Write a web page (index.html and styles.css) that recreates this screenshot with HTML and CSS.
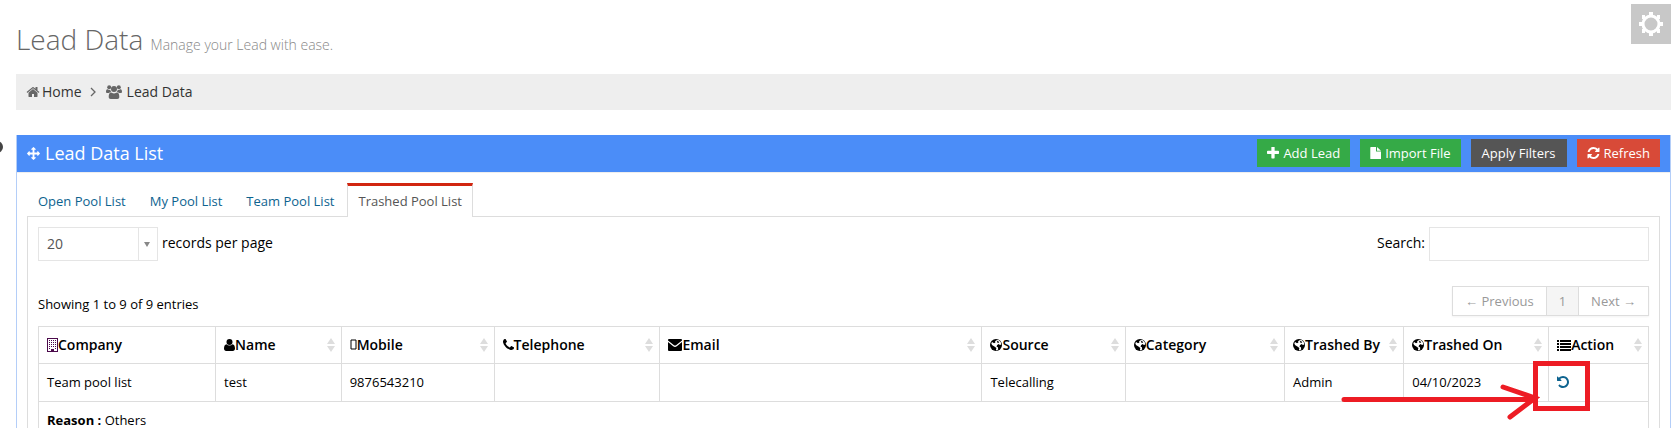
FILE: index.html
```
<!DOCTYPE html>
<html lang="en">
<head>
    <meta charset="UTF-8">
    <meta name="viewport" content="width=device-width, initial-scale=1.0">
    <title>Lead Data</title>
    <link rel="stylesheet" href="styles.css">
</head>
<body>
    <!-- Icon set -->
    <svg class="icon-set" aria-hidden="true">
        <symbol id="i-home" viewBox="0 0 1792 1792"><path d="M1472 992v480q0 26-19 45t-45 19h-384v-384h-256v384h-384q-26 0-45-19t-19-45v-480q0-1 .5-3t.5-3l575-474 575 474q1 2 1 6zm223-69l-62 74q-8 9-21 11h-3q-13 0-21-7l-692-577-692 577q-12 8-24 7-13-2-21-11l-62-74q-8-10-7-23.5t11-21.5l719-599q32-26 76-26t76 26l244 204v-195q0-14 9-23t23-9h192q14 0 23 9t9 23v408l219 182q10 8 11 21.5t-7 23.5z"/></symbol>
        <symbol id="i-users" viewBox="0 0 16 14"><circle cx="3.2" cy="2.2" r="2"/><circle cx="12.8" cy="2.2" r="2"/><circle cx="8" cy="4" r="3"/><path d="M0 7c0-1.600.5-2.700 1.300-2.700.5 0 1 .6 2 .6.400 0 .7 0 1-.2 0 1 .3 1.700.9 2.400C4.200 7.100 3.500 7.500 3 8H1.500C.6 8 0 7.700 0 7zM16 7c0-1.600-.5-2.700-1.300-2.700-.5 0-1 .6-2 .6-.4 0-.7 0-1-.2 0 1-.3 1.700-.9 2.400 1 0 1.700.4 2.200.9h1.500c.9 0 1.500-.3 1.500-1zM4.700 14h6.600c1.300 0 2-.8 2-2 0-2.400-.6-4.500-2.500-4.500-.4 0-1.300 1-2.800 1s-2.400-1-2.800-1c-1.900 0-2.500 2.100-2.500 4.500 0 1.200.7 2 2 2z"/></symbol>
        <symbol id="i-arrows" viewBox="0 0 1792 1792"><path d="M1792 896q0 26-19 45l-256 256q-19 19-45 19t-45-19-19-45v-128h-384v384h128q26 0 45 19t19 45-19 45l-256 256q-19 19-45 19t-45-19l-256-256q-19-19-19-45t19-45 45-19h128v-384h-384v128q0 26-19 45t-45 19-45-19l-256-256q-19-19-19-45t19-45l256-256q19-19 45-19t45 19 19 45v128h384v-384h-128q-26 0-45-19t-19-45 19-45l256-256q19-19 45-19t45 19l256 256q19 19 19 45t-19 45-45 19h-128v384h384v-128q0-26 19-45t45-19 45 19l256 256q19 19 19 45z"/></symbol>
        <symbol id="i-plus" viewBox="192 192 1408 1408"><path d="M1600 736v192q0 40-28 68t-68 28h-416v416q0 40-28 68t-68 28h-192q-40 0-68-28t-28-68v-416h-416q-40 0-68-28t-28-68v-192q0-40 28-68t68-28h416v-416q0-40 28-68t68-28h192q40 0 68 28t28 68v416h416q40 0 68 28t28 68z"/></symbol>
        <symbol id="i-file" viewBox="0 0 11 12"><path d="M1 0h5v4.500h5V11.500q0 .5-.5.5H.8q-.5 0-.5-.5V.7Q.3 0 1 0zM7 0l4 3.700H7z"/></symbol>
        <symbol id="i-refresh" viewBox="128 128 1536 1536"><path d="M1639 1056q0 5-1 7-64 268-268 434.500t-478 166.500q-146 0-282.500-55t-243.500-157l-129 129q-19 19-45 19t-45-19-19-45v-448q0-26 19-45t45-19h448q26 0 45 19t19 45-19 45l-137 137q71 66 161 102t187 36q134 0 250-65t186-179q11-17 53-117 8-23 30-23h192q13 0 22.500 9.500t9.500 22.500zm25-800v448q0 26-19 45t-45 19h-448q-26 0-45-19t-19-45 19-45l138-138q-148-137-349-137-134 0-250 65t-186 179q-11 17-53 117-8 23-30 23h-199q-13 0-22.500-9.500t-9.500-22.500v-7q65-268 270-434.500t480-166.500q146 0 284 55.500t245 156.500l130-129q19-19 45-19t45 19 19 45z"/></symbol>
        <symbol id="i-undo" viewBox="128 128 1536 1536"><path d="M1664 896q0 156-61 298t-164 245-245 164-298 61q-172 0-327-72.500t-264-204.500q-7-10-6.500-22.500t8.500-20.500l137-138q10-9 25-9 16 2 23 12 73 95 179 147t225 52q104 0 198.500-40.500t163.500-109.500 109.500-163.500 40.500-198.500-40.500-198.500-109.500-163.500-163.500-109.500-198.500-40.500q-98 0-188 35.500t-160 101.500l137 138q31 30 14 69-17 40-59 40h-448q-26 0-45-19t-19-45v-448q0-42 40-59 39-17 69 14l130 129q107-101 244.500-156.500t284.500-55.500q156 0 298 61t245 164 164 245 61 298z"/></symbol>
        <symbol id="i-building" viewBox="0 0 11 14"><path d="M0 0h11v14H0zM1 1v12h3v-2h3v2h3V1z" fill-rule="evenodd"/><path d="M2 2.500h7M2 4.500h7M2 6.500h7M2 8.500h7M2 10.500h1M8 10.500h1" stroke="currentColor" stroke-dasharray="1 1"/></symbol>
        <symbol id="i-user" viewBox="0 0 11 12"><circle cx="5.500" cy="3" r="3"/><path d="M2.500 5.200C.8 5.400 0 7 0 9.600 0 11.200.9 12 2.200 12h6.600c1.300 0 2.200-.8 2.200-2.400 0-2.600-.8-4.200-2.500-4.400C7.700 6 6.700 6.400 5.500 6.400S3.300 6 2.500 5.200z"/></symbol>
        <symbol id="i-box" viewBox="0 0 7 12"><path d="M1 1h5v9H1z" fill="none" stroke="currentColor"/></symbol>
        <symbol id="i-phone" viewBox="192 256 1408 1280"><path d="M1600 1240q0 27-10 70.500t-21 68.500q-21 50-122 106-94 51-186 51-27 0-52.500-3.500t-57.500-12.500-47.500-14.500-55.500-20.500-49-18q-98-35-175-83-128-79-264.500-215.500t-215.500-264.500q-48-77-83-175-3-9-18-49t-20.500-55.500-14.500-47.500-12.500-57.500-3.500-52.500q0-92 51-186 56-101 106-122 25-11 68.500-21t70.500-10q14 0 21 3 18 6 53 76 11 19 30 54t35 63.500 31 53.500q3 4 17.500 25t21.500 35.500 7 28.500q0 20-28.500 50t-62 55-62 53-28.500 46q0 9 5 22.500t8.500 20.500 14 24 11.500 19q76 137 174 235t235 174q2 1 19 11.500t24 14 20.500 8.500 22.500 5q18 0 46-28.500t53-62 55-62 50-28.500q14 0 28.500 7t35.500 21.500 25 17.500q25 15 53.500 31t63.500 35 54 30q70 35 76 53 3 7 3 21z"/></symbol>
        <symbol id="i-mail" viewBox="0 0 14 12"><path d="M0 1q0-1 1-1h12q1 0 1 1v.4L8 6.200q-1 .8-2 0L0 1.400zM0 3l5.200 4.300q1.800 1.200 3.600 0L14 3v8q0 1-1 1H1q-1 0-1-1z"/></symbol>
        <symbol id="i-globe" viewBox="0 0 12 12"><circle cx="6" cy="6" r="6"/><path d="M6.500 1.200l2-.1 2.200 2 .6 2.500-1.400.3-1.200-.8-1.500.8-.7 1.600 1.400.8.3 2.200-1.600.9-.7-.7.5-1.600-2-1.700L2 6 1.300 4.200l.8-1.300L4 4.300l1.400-.9-.3-1.200z" fill="#fff" fill-rule="evenodd"/><path d="M6.800 2l1.600.2.800 1.300-1.500.6z"/></symbol>
        <symbol id="i-list" viewBox="0 0 14 11"><path d="M0 0h2v2H0zM3 0h11v2H3zM0 3h2v2H0zM3 3h11v2H3zM0 6h2v2H0zM3 6h11v2H3zM0 9h2v2H0zM3 9h11v2H3z"/></symbol>
        <symbol id="i-sort" viewBox="0 0 8 14"><path d="M4 0l4 6H0zM0 8h8l-4 6z"/></symbol>
    </svg>

    <div class="sidebar-dot"></div>

    <div class="page">
        <header class="page-head">
            <h1>Lead Data <small>Manage your Lead with ease.</small></h1>
            <button class="theme-button" aria-label="Settings">
                <svg class="outline" width="24" height="24" viewBox="0 0 24 24"><circle cx="12" cy="12" r="8" stroke="#fff" stroke-width="3"/><path d="M10 0h4v4h-4zM10 20h4v4h-4zM0 10h4v4H0zM20 10h4v4h-4zM3 3h3v4H3zM18 3h3v4h-3zM3 17h3v4H3zM18 17h3v4h-3z" fill="#fff"/></svg>
            </button>
        </header>

        <nav class="breadcrumb">
            <svg class="icon" width="14" height="14"><use href="#i-home"/></svg>
            <a href="#">Home</a>
            <svg class="chevron outline" width="6" height="10" viewBox="0 0 6 10"><path d="M1 1l4 4-4 4" stroke="#666" stroke-width="1.300"/></svg>
            <svg class="icon" width="16" height="14"><use href="#i-users"/></svg>
            <a class="crumb-last" href="#">Lead Data</a>
        </nav>

        <section class="portlet">
            <div class="portlet-title">
                <svg class="icon" width="13" height="13"><use href="#i-arrows"/></svg>
                <h2>Lead Data List</h2>
                <div class="actions">
                    <button class="btn green"><svg class="icon" width="12" height="12"><use href="#i-plus"/></svg>Add Lead</button>
                    <button class="btn green"><svg class="icon" width="11" height="12"><use href="#i-file"/></svg>Import File</button>
                    <button class="btn dark">Apply Filters</button>
                    <button class="btn red"><svg class="icon" width="13" height="12"><use href="#i-refresh"/></svg>Refresh</button>
                </div>
            </div>

            <div class="portlet-body">
                <div class="tabs">
                    <a href="#">Open Pool List</a>
                    <a href="#">My Pool List</a>
                    <a href="#">Team Pool List</a>
                    <a href="#" class="active">Trashed Pool List</a>
                </div>

                <div class="tab-content">
                    <div class="toolbar">
                        <div class="length">
                            <span class="select-box">
                                <select id="length"><option>20</option><option>50</option><option>100</option></select>
                            </span>
                            <label for="length">records per page</label>
                        </div>
                        <div class="filter">
                            <label for="search">Search:</label>
                            <input type="text" id="search">
                        </div>
                    </div>

                    <div class="table-info">
                        <div class="showing">Showing 1 to 9 of 9 entries</div>
                        <div class="pagination">
                            <a href="#">← Previous</a>
                            <a href="#" class="current">1</a>
                            <a href="#">Next →</a>
                        </div>
                    </div>

                    <table class="leads">
                        <colgroup>
                            <col class="c-company"><col class="c-name"><col class="c-mobile"><col class="c-phone"><col class="c-email">
                            <col class="c-source"><col class="c-category"><col class="c-by"><col class="c-on"><col class="c-action">
                        </colgroup>
                        <thead>
                            <tr>
                                <th><div class="th"><svg class="purple" width="11" height="14"><use href="#i-building"/></svg>Company</div></th>
                                <th><div class="th"><svg width="11" height="12"><use href="#i-user"/></svg>Name<svg class="sort" width="8" height="14"><use href="#i-sort"/></svg></div></th>
                                <th><div class="th"><svg width="7" height="12"><use href="#i-box"/></svg>Mobile<svg class="sort" width="8" height="14"><use href="#i-sort"/></svg></div></th>
                                <th><div class="th"><svg width="11" height="12"><use href="#i-phone"/></svg>Telephone<svg class="sort" width="8" height="14"><use href="#i-sort"/></svg></div></th>
                                <th><div class="th"><svg width="14" height="12"><use href="#i-mail"/></svg>Email<svg class="sort" width="8" height="14"><use href="#i-sort"/></svg></div></th>
                                <th><div class="th"><svg width="12" height="12"><use href="#i-globe"/></svg>Source<svg class="sort" width="8" height="14"><use href="#i-sort"/></svg></div></th>
                                <th><div class="th"><svg width="12" height="12"><use href="#i-globe"/></svg>Category<svg class="sort" width="8" height="14"><use href="#i-sort"/></svg></div></th>
                                <th><div class="th"><svg width="12" height="12"><use href="#i-globe"/></svg>Trashed By<svg class="sort" width="8" height="14"><use href="#i-sort"/></svg></div></th>
                                <th><div class="th"><svg width="12" height="12"><use href="#i-globe"/></svg>Trashed On<svg class="sort" width="8" height="14"><use href="#i-sort"/></svg></div></th>
                                <th><div class="th"><svg width="14" height="11"><use href="#i-list"/></svg>Action<svg class="sort" width="8" height="14"><use href="#i-sort"/></svg></div></th>
                            </tr>
                        </thead>
                        <tbody>
                            <tr>
                                <td>Team pool list</td>
                                <td>test</td>
                                <td>9876543210</td>
                                <td></td>
                                <td></td>
                                <td>Telecalling</td>
                                <td></td>
                                <td>Admin</td>
                                <td>04/10/2023</td>
                                <td class="action-cell">
                                    <a href="#" aria-label="Restore"><svg class="icon" width="12" height="12"><use href="#i-undo"/></svg></a>
                                    <!-- Arrow and box that point at the restore link -->
                                    <svg class="marker outline" width="252" height="60" viewBox="0 0 252 60" stroke="#ed1c24" stroke-width="5">
                                        <path d="M194.500 3.500h52v45h-52z"/>
                                        <path d="M3 39.500h190M162 27l32 11-25 19" stroke-linecap="round"/>
                                    </svg>
                                </td>
                            </tr>
                            <tr>
                                <td colspan="10"><b>Reason :</b> Others</td>
                            </tr>
                        </tbody>
                    </table>
                </div>
            </div>
        </section>
    </div>
</body>
</html>
```

FILE: styles.css
```
* { box-sizing: border-box; }
html { overflow: hidden; }
body {
    margin: 0;
    background-color: #fff;
    color: #000;
    font-family: "Open Sans", sans-serif;
    font-size: 13px;
    line-height: 20px;
}
a { text-decoration: none; color: #0d638f; }
button, input, select { font-family: inherit; }
svg { flex: none; fill: currentColor; }
.outline { fill: none; }
.icon-set { position: absolute; width: 0; height: 0; }

/* Edge of the collapsed sidebar toggler */
.sidebar-dot {
    position: absolute;
    left: -9px;
    top: 141px;
    width: 12px;
    height: 12px;
    border-radius: 50%;
    background-color: #444;
}

.page { padding: 4px 2px 0 16px; }

/* Heading */
.page-head {
    display: flex;
    justify-content: space-between;
    height: 70px;
}
h1 {
    margin: 16px 0 0;
    font-size: 28px;
    line-height: 38px;
    font-weight: 300;
    color: #666;
}
h1 small { font-size: 14px; font-weight: 300; color: #888; }
.theme-button {
    display: flex;
    align-items: center;
    justify-content: center;
    width: 40px;
    height: 40px;
    padding: 0;
    border: 0;
    background-color: #c8c8c8;
}

.breadcrumb {
    display: flex;
    align-items: center;
    height: 36px;
    padding: 0 10px;
    background-color: #eee;
    font-size: 14px;
    color: #666;
}
.breadcrumb a { margin-left: 2px; color: #333; }
.breadcrumb .chevron { margin: 0 10px 0 8px; }
.breadcrumb .crumb-last { margin-left: 5px; }

/* Blue panel */
.portlet {
    margin-top: 25px;
    border: 1px solid #b4cef8;
    border-top: 0;
}
.portlet-title {
    display: flex;
    align-items: center;
    height: 38px;
    padding: 0 10px 1px;
    border-bottom: 1px solid #eee;
    background-color: #4b8df8;
    color: #fff;
}
h2 {
    margin: 0 auto 0 5px;
    font-size: 18px;
    line-height: 24px;
    font-weight: 400;
}
.actions { display: flex; gap: 10px; }
.btn {
    display: flex;
    align-items: center;
    gap: 4px;
    height: 28px;
    padding: 0 10px;
    border: 0;
    color: #fff;
    font-size: 13px;
    cursor: pointer;
}
.green { background-color: #35aa47; }
.dark { padding: 0 11px; background-color: #555; }
.red { background-color: #d84a38; }

.portlet-body { padding: 10px; }

/* Tabs */
.tabs { display: flex; }
.tabs a {
    height: 33px;
    padding: 5px 13px 0 11px;
    border-top: 3px solid transparent;
}
.tabs .active {
    position: relative;
    height: 34px;
    margin-bottom: -1px;
    padding: 5px 10px 0;
    border: 1px solid #ddd;
    border-top: 3px solid #d12610;
    border-bottom: 0;
    background-color: #fff;
    color: #555;
}
.tab-content {
    padding: 10px;
    border: 1px solid #ddd;
}

.toolbar {
    display: flex;
    justify-content: space-between;
    font-size: 14px;
}
.toolbar label { padding-bottom: 2px; }
.length, .filter { display: flex; align-items: center; gap: 4px; }
.select-box { position: relative; width: 120px; height: 34px; }
.select-box select {
    width: 100%;
    height: 100%;
    padding: 0 8px 2px;
    border: 1px solid #e5e5e5;
    border-radius: 0;
    background-color: #fff;
    color: #555;
    font-size: 14px;
    appearance: none;
}
.select-box::before {
    content: "";
    position: absolute;
    top: 0;
    bottom: 0;
    right: 19px;
    border-left: 1px solid #e5e5e5;
}
.select-box::after {
    content: "";
    position: absolute;
    top: 15px;
    right: 8px;
    border: 3px solid transparent;
    border-top: 5px solid #888;
    border-bottom: 0;
}
.filter input {
    width: 220px;
    height: 34px;
    padding: 6px 12px;
    border: 1px solid #e5e5e5;
    font-size: 14px;
}

.table-info {
    display: flex;
    align-items: flex-end;
    justify-content: space-between;
    margin-top: 25px;
}
.showing { padding-bottom: 2px; }
.pagination {
    display: flex;
    border: 1px solid #ddd;
    box-shadow: 0 1px 2px rgba(0, 0, 0, 0.05);
    font-family: "Open Sans", "Liberation Sans", sans-serif;
}
.pagination a { padding: 4px 12px; color: #999; }
.pagination .current {
    border: solid #ddd;
    border-width: 0 1px;
    background-color: #f5f5f5;
}

/* Leads table */
.leads {
    width: 100%;
    margin-top: 10px;
    border-collapse: collapse;
    table-layout: fixed;
}
.leads th, .leads td {
    height: 38px;
    padding: 7px 8px 9px;
    border: 1px solid #ddd;
    text-align: left;
}
.leads th {
    height: 37px;
    padding: 8px;
    font-size: 14px;
    font-weight: 600;
}
.th { display: flex; align-items: center; white-space: nowrap; }
.th .sort { margin-left: auto; margin-right: -2px; color: #ddd; }
.purple { color: #4b0a4b; }

.c-company { width: 11%; }
.c-name { width: 7.8%; }
.c-mobile { width: 9.5%; }
.c-phone { width: 10.3%; }
.c-email { width: 20%; }
.c-source { width: 8.9%; }
.c-category { width: 9.9%; }
.c-by { width: 7.4%; }
.c-on { width: 9%; }
.c-action { width: 6.2%; }

.action-cell { position: relative; }
.action-cell .icon { display: block; }
.marker {
    position: absolute;
    top: -4px;
    right: 55px;
}
```
